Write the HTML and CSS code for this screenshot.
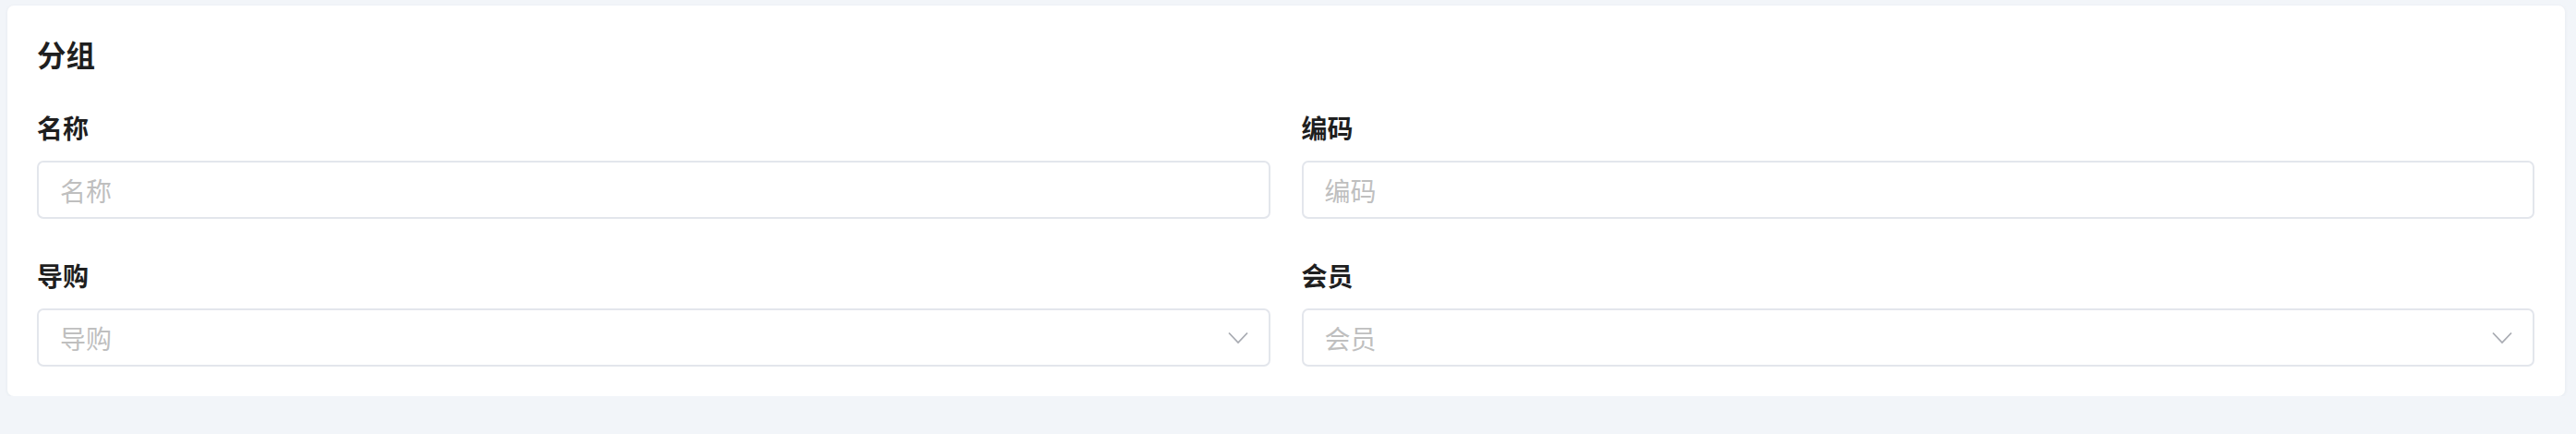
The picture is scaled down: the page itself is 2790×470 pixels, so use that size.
FILE: index.html
```html
<!DOCTYPE html>
<html lang="zh-CN">
<head>
<meta charset="utf-8">
<title>分组</title>
<link rel="stylesheet" href="styles.css">
</head>
<body>
<div class="page">
  <section class="card">
    <h2 class="card-title">分组</h2>
    <div class="form-grid">
      <div class="field">
        <label class="field-label">名称</label>
        <input class="control" type="text" placeholder="名称">
      </div>
      <div class="field">
        <label class="field-label">编码</label>
        <input class="control" type="text" placeholder="编码">
      </div>
      <div class="field">
        <label class="field-label">导购</label>
        <div class="control select">
          <span class="placeholder">导购</span>
          <svg class="chevron" width="22" height="14" viewBox="0 0 22 14"><path d="M1 1.5 L11 12 L21 1.5" fill="none" stroke="#a8abb2" stroke-width="1.8"/></svg>
        </div>
      </div>
      <div class="field">
        <label class="field-label">会员</label>
        <div class="control select">
          <span class="placeholder">会员</span>
          <svg class="chevron" width="22" height="14" viewBox="0 0 22 14"><path d="M1 1.5 L11 12 L21 1.5" fill="none" stroke="#a8abb2" stroke-width="1.8"/></svg>
        </div>
      </div>
    </div>
  </section>
</div>
</body>
</html>
```

FILE: styles.css
```css
html, body {
  margin: 0;
  padding: 0;
  background: #f2f5f9;
}
body {
  font-family: "Noto Sans CJK SC", "Noto Sans", sans-serif;
  color: #1f2329;
}
.page {
  padding: 6px 12px 0 8px;
}
.card {
  background: #ffffff;
  border-radius: 7px;
  box-shadow: 0 1px 4px rgba(30, 50, 90, 0.06);
  padding: 32px 33px 32px 32px;
}
.card-title {
  margin: 0 0 39px 0;
  font-size: 31.5px;
  line-height: 40px;
  font-weight: 700;
  color: #1f1f1f;
}
.form-grid {
  display: grid;
  grid-template-columns: 1fr 1fr;
  column-gap: 34px;
  row-gap: 40px;
}
.field {
  display: flex;
  flex-direction: column;
}
.field-label {
  font-size: 28px;
  line-height: 42px;
  font-weight: 700;
  color: #1f1f1f;
  margin-bottom: 15px;
}
.control {
  box-sizing: border-box;
  height: 63px;
  width: 100%;
  border: 2px solid #e3e6ec;
  border-radius: 7px;
  background: #fff;
  padding: 0 22px 0 23px;
  font-family: "Noto Sans CJK SC", "Noto Sans", sans-serif;
  font-size: 28px;
  color: #1f1f1f;
  outline: none;
}
.control::placeholder {
  color: #bfbfbf;
}
.select {
  display: flex;
  align-items: center;
  justify-content: space-between;
}
.placeholder {
  color: #bfbfbf;
  line-height: 1;
}
.chevron {
  display: block;
  flex: none;
}
```
